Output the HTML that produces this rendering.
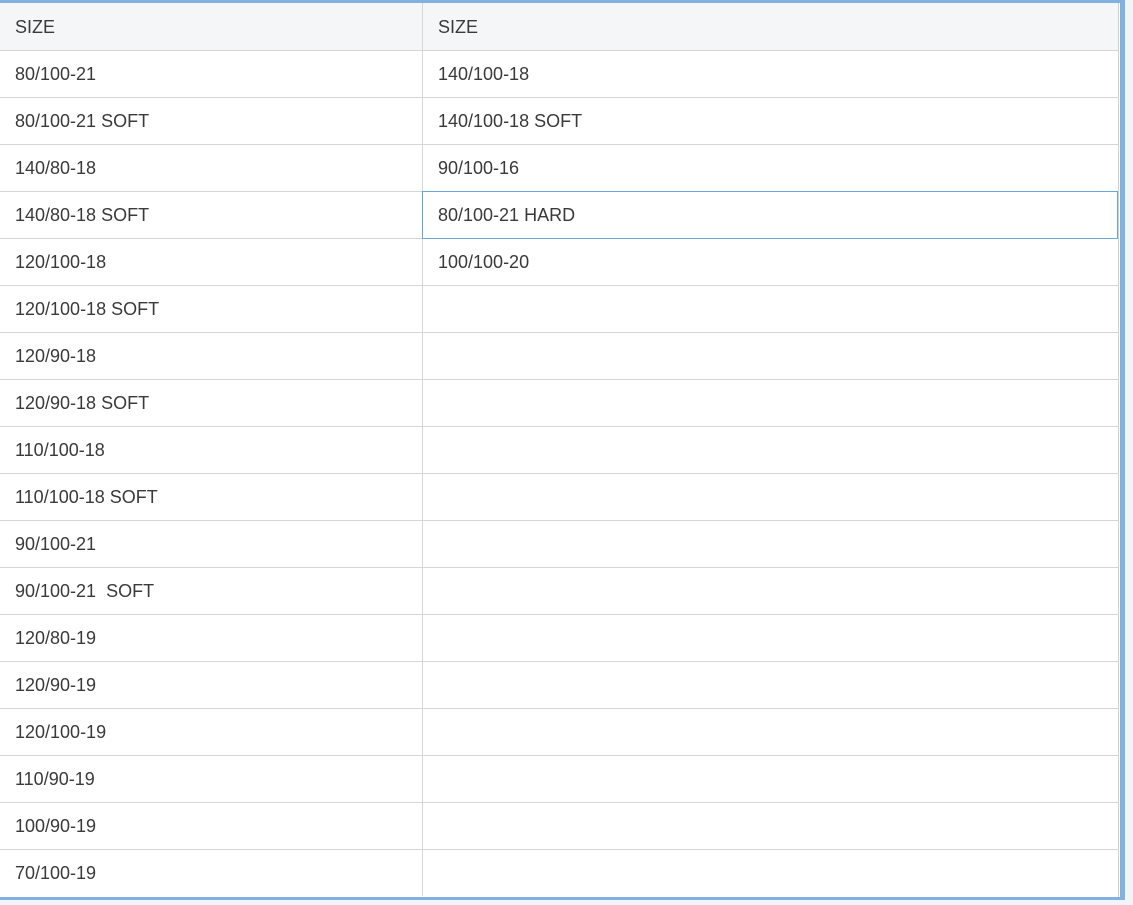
<!DOCTYPE html>
<html><head><style>
*{margin:0;padding:0;box-sizing:border-box}
body{width:1133px;height:905px;background:#f1f4f8;position:relative;overflow:hidden;font-family:"Liberation Sans",Roboto,sans-serif;color:#3a3a3a}
.wrap{position:absolute;left:0;top:0;width:1125px;height:900px;border-top:3px solid #80b1df;border-right:5px solid #80b1df;border-bottom:3px solid #80b1df;background:#fff}
.grid{position:absolute;left:0;top:0;width:1119px;height:894px;border-right:1px solid #d0d0d0}
.row{position:absolute;left:0;width:1118px;height:47px;border-bottom:1px solid #d6d6d6}
.hdr{background:#f5f6f8}
.c{position:absolute;top:0;height:46px;line-height:47px;font-size:18px;padding-left:15px;white-space:pre}
.c1{left:0;width:423px;border-right:1px solid #d6d6d6}
.c2{left:423px;width:695px}
.sel{position:absolute;left:422px;top:188px;width:696px;height:48px;border:1px solid #6aa6d6}
</style></head><body>
<div class="wrap"><div class="grid">
<div class="row hdr" style="top:0;height:48px"><div class="c c1" style="height:47px;line-height:48px">SIZE</div><div class="c c2" style="line-height:48px">SIZE</div></div>
<div class="row" style="top:48px"><div class="c c1">80/100-21</div><div class="c c2">140/100-18</div></div>
<div class="row" style="top:95px"><div class="c c1">80/100-21 SOFT</div><div class="c c2">140/100-18 SOFT</div></div>
<div class="row" style="top:142px"><div class="c c1">140/80-18</div><div class="c c2">90/100-16</div></div>
<div class="row" style="top:189px"><div class="c c1">140/80-18 SOFT</div><div class="c c2">80/100-21 HARD</div></div>
<div class="row" style="top:236px"><div class="c c1">120/100-18</div><div class="c c2">100/100-20</div></div>
<div class="row" style="top:283px"><div class="c c1">120/100-18 SOFT</div></div>
<div class="row" style="top:330px"><div class="c c1">120/90-18</div></div>
<div class="row" style="top:377px"><div class="c c1">120/90-18 SOFT</div></div>
<div class="row" style="top:424px"><div class="c c1">110/100-18</div></div>
<div class="row" style="top:471px"><div class="c c1">110/100-18 SOFT</div></div>
<div class="row" style="top:518px"><div class="c c1">90/100-21</div></div>
<div class="row" style="top:565px"><div class="c c1">90/100-21  SOFT</div></div>
<div class="row" style="top:612px"><div class="c c1">120/80-19</div></div>
<div class="row" style="top:659px"><div class="c c1">120/90-19</div></div>
<div class="row" style="top:706px"><div class="c c1">120/100-19</div></div>
<div class="row" style="top:753px"><div class="c c1">110/90-19</div></div>
<div class="row" style="top:800px"><div class="c c1">100/90-19</div></div>
<div class="row" style="top:847px;border-bottom:none"><div class="c c1">70/100-19</div></div>
<div class="sel"></div>
</div></div>
</body></html>
